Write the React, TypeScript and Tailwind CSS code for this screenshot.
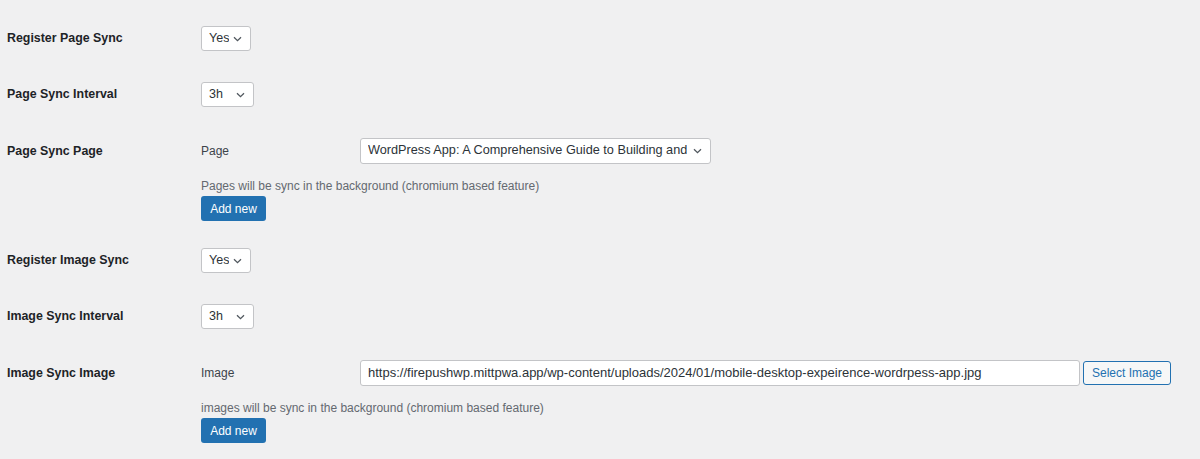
const font = { fontFamily: '"Liberation Sans", Arial, sans-serif' }

function Chevron() {
  return (
    <svg width="9" height="6" viewBox="0 0 9 6" className="shrink-0">
      <path d="M1 1.2 L4.5 4.6 L8 1.2" fill="none" stroke="#50575e" strokeWidth="1.3" />
    </svg>
  )
}

function Select({ value, width }: { value: string; width: string }) {
  return (
    <div
      className={`flex h-[25px] ${width} items-center justify-between rounded-[3px] border border-[#c3c4c7] bg-white pl-[7px] pr-[8px] text-[12.5px] text-[#2c3338]`}
    >
      <span className="truncate">{value}</span>
      <Chevron />
    </div>
  )
}

function SimpleRow({ label, value, width }: { label: string; value: string; width: string }) {
  return (
    <div className="flex items-center pt-[16px] pb-[15px]">
      <div className="w-[201px] shrink-0 pl-[7px] text-[12.4px] font-bold text-[#1d2327]">{label}</div>
      <Select value={value} width={width} />
    </div>
  )
}

function AddNew() {
  return (
    <button
      type="button"
      className="mt-[2px] h-[25px] w-[65px] rounded-[3px] bg-[#2271b1] text-[12px] text-white"
    >
      Add new
    </button>
  )
}

export default function App() {
  return (
    <div className="min-h-[459px] w-[1200px] bg-[#f0f0f1] pt-[10px]" style={font}>
      <SimpleRow label="Register Page Sync" value="Yes" width="w-[50px]" />
      <SimpleRow label="Page Sync Interval" value="3h" width="w-[53px]" />

      {/* Page Sync Page */}
      <div className="flex pt-[16px] pb-[11px]">
        <div className="flex h-[26px] w-[201px] shrink-0 items-center pl-[7px] text-[12.4px] font-bold text-[#1d2327]">
          Page Sync Page
        </div>
        <div className="flex flex-col items-start">
          <div className="flex items-center">
            <div className="w-[159px] text-[12px] text-[#3c434a]">Page</div>
            <div className="flex h-[26px] w-[351px] items-center justify-between rounded-[3px] border border-[#c3c4c7] bg-white pl-[7px] pr-[8px] text-[12.7px] text-[#2c3338]">
              <span className="truncate">WordPress App: A Comprehensive Guide to Building and</span>
              <Chevron />
            </div>
          </div>
          <p className="mt-[14px] h-[16px] text-[12px] leading-[16px] text-[#646970]">
            Pages will be sync in the background (chromium based feature)
          </p>
          <AddNew />
        </div>
      </div>

      <SimpleRow label="Register Image Sync" value="Yes" width="w-[50px]" />
      <SimpleRow label="Image Sync Interval" value="3h" width="w-[53px]" />

      {/* Image Sync Image */}
      <div className="flex pt-[16px] pb-[11px]">
        <div className="flex h-[26px] w-[201px] shrink-0 items-center pl-[7px] text-[12.4px] font-bold text-[#1d2327]">
          Image Sync Image
        </div>
        <div className="flex flex-col items-start">
          <div className="flex items-center">
            <div className="w-[159px] text-[12px] text-[#3c434a]">Image</div>
            <div className="flex h-[26px] w-[720px] items-center overflow-hidden whitespace-nowrap rounded-[3px] border border-[#c3c4c7] bg-white px-[7px] text-[13px] text-[#2c3338]">
              https://firepushwp.mittpwa.app/wp-content/uploads/2024/01/mobile-desktop-expeirence-wordrpess-app.jpg
            </div>
            <button
              type="button"
              className="ml-[3px] h-[24px] w-[88px] rounded-[3px] border border-[#2271b1] bg-[#f6f7f7] text-[12px] text-[#2271b1]"
            >
              Select Image
            </button>
          </div>
          <p className="mt-[14px] h-[16px] text-[12px] leading-[16px] text-[#646970]">
            images will be sync in the background (chromium based feature)
          </p>
          <AddNew />
        </div>
      </div>
    </div>
  )
}
